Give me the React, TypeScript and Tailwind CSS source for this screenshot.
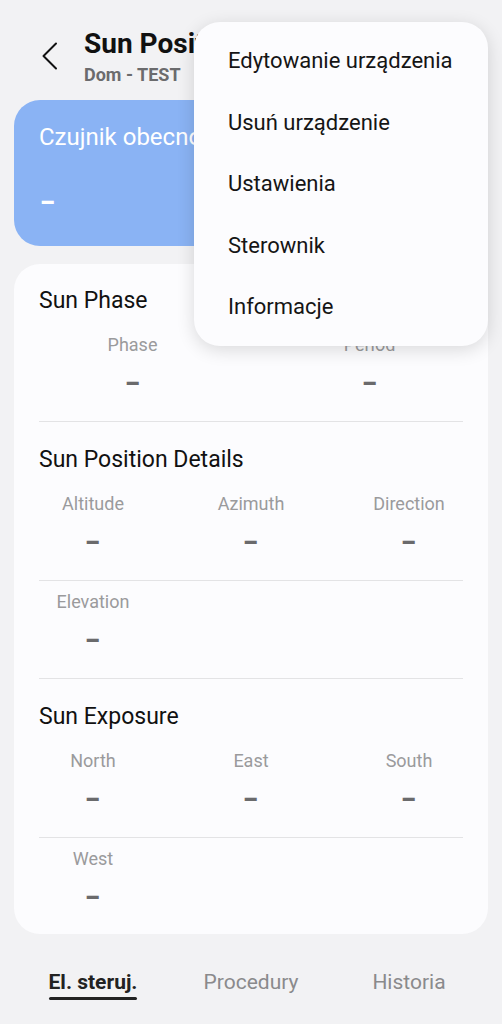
type Cell = { label: string };

const sections: { title: string; rows: { cols: number; cells: Cell[] }[] }[] = [
  {
    title: "Sun Phase",
    rows: [{ cols: 2, cells: [{ label: "Phase" }, { label: "Period" }] }],
  },
  {
    title: "Sun Position Details",
    rows: [
      { cols: 3, cells: [{ label: "Altitude" }, { label: "Azimuth" }, { label: "Direction" }] },
      { cols: 3, cells: [{ label: "Elevation" }] },
    ],
  },
  {
    title: "Sun Exposure",
    rows: [
      { cols: 3, cells: [{ label: "North" }, { label: "East" }, { label: "South" }] },
      { cols: 3, cells: [{ label: "West" }] },
    ],
  },
];

const menuItems = ["Edytowanie urządzenia", "Usuń urządzenie", "Ustawienia", "Sterownik", "Informacje"];

function Dash({ className }: { className: string }) {
  return <span className={"inline-block scale-x-[1.45] text-[30px] leading-[24px] font-bold " + className}>-</span>;
}

function Row({ cols, cells, first, end }: { cols: number; cells: Cell[]; first: boolean; end: boolean }) {
  return (
    <div className={(cols === 2 ? "grid grid-cols-2" : "grid grid-cols-3") + (first ? " pt-[19px]" : " pt-[10px]") + (end ? " pb-[26px]" : " pb-[27px]")}>
      {cells.map((c) => (
        <div key={c.label} className="flex flex-col items-center">
          <span className="text-[18px] leading-[22px] text-[#9a9a9c]">{c.label}</span>
          <div className="mt-[14px] h-[24px] flex items-center justify-center">
            <Dash className="text-[#6a6a6c]" />
          </div>
        </div>
      ))}
    </div>
  );
}

function App() {
  return (
    <div className="relative w-[502px] h-[1024px] overflow-hidden bg-[#f2f2f4] font-['Roboto',sans-serif]">
      {/* header */}
      <div className="h-[100px] flex items-start pl-[41px] pt-[27px]">
        <svg width="17" height="28" viewBox="0 0 17 28" className="mt-[15px]" fill="none">
          <path d="M15 1.5 L2.5 14 L15 26.5" stroke="#111" strokeWidth="2" strokeLinecap="round" strokeLinejoin="round" />
        </svg>
        <div className="ml-[26px] flex flex-col">
          <h1 className="text-[28px] leading-[34px] font-bold text-[#111] whitespace-nowrap">Sun Position</h1>
          <span className="mt-[3px] text-[18px] leading-[22px] font-bold text-[#6b6b6d]">Dom - TEST</span>
        </div>
      </div>

      {/* presence card */}
      <div className="mx-[14px] h-[146px] rounded-[26px] bg-[#8ab3f4] px-[25px] pt-[23px]">
        <div className="text-[24px] leading-[28px] text-white whitespace-nowrap">Czujnik obecności</div>
        <div className="mt-[38px] h-[24px] flex items-center">
          <Dash className="text-white ml-[3px]" />
        </div>
      </div>

      {/* details card */}
      <div className="mx-[14px] mt-[18px] rounded-[26px] bg-[#fcfcfe] pt-[23px]">
        {sections.map((s, si) => (
          <div key={s.title}>
            {si > 0 && <div className="mx-[25px] h-px bg-[#e3e3e5]" />}
            <h2 className={"px-[25px] text-[23px] leading-[28px] text-[#111]" + (si > 0 ? " pt-[24px]" : "")}>{s.title}</h2>
            {s.rows.map((r, ri) => (
              <div key={ri}>
                {ri > 0 && <div className="mx-[25px] h-px bg-[#e3e3e5]" />}
                <Row
                  cols={r.cols}
                  cells={r.cells}
                  first={ri === 0}
                  end={si === sections.length - 1 && ri === s.rows.length - 1}
                />
              </div>
            ))}
          </div>
        ))}
      </div>

      {/* tabs */}
      <div className="mx-[14px] mt-[35px] grid grid-cols-3">
        <div className="flex justify-center">
          <div className="flex flex-col items-center">
            <span className="text-[21px] leading-[26px] font-bold text-[#222]">El. steruj.</span>
            <span className="mt-[2px] h-[3px] w-full rounded-full bg-[#222]" />
          </div>
        </div>
        <div className="flex justify-center">
          <span className="text-[21px] leading-[26px] text-[#8a8a8c]">Procedury</span>
        </div>
        <div className="flex justify-center">
          <span className="text-[21px] leading-[26px] text-[#8a8a8c]">Historia</span>
        </div>
      </div>

      {/* overflow menu */}
      <div className="absolute left-[194px] top-[22px] w-[294px] h-[324px] rounded-[26px] bg-[#fcfcfe] pt-[8px] shadow-[0_4px_18px_rgba(0,0,0,0.14)]">
        {menuItems.map((m) => (
          <div key={m} className="h-[61.5px] flex items-center pl-[34px] text-[22px] text-[#151515]">
            {m}
          </div>
        ))}
      </div>
    </div>
  );
}

export default App;
